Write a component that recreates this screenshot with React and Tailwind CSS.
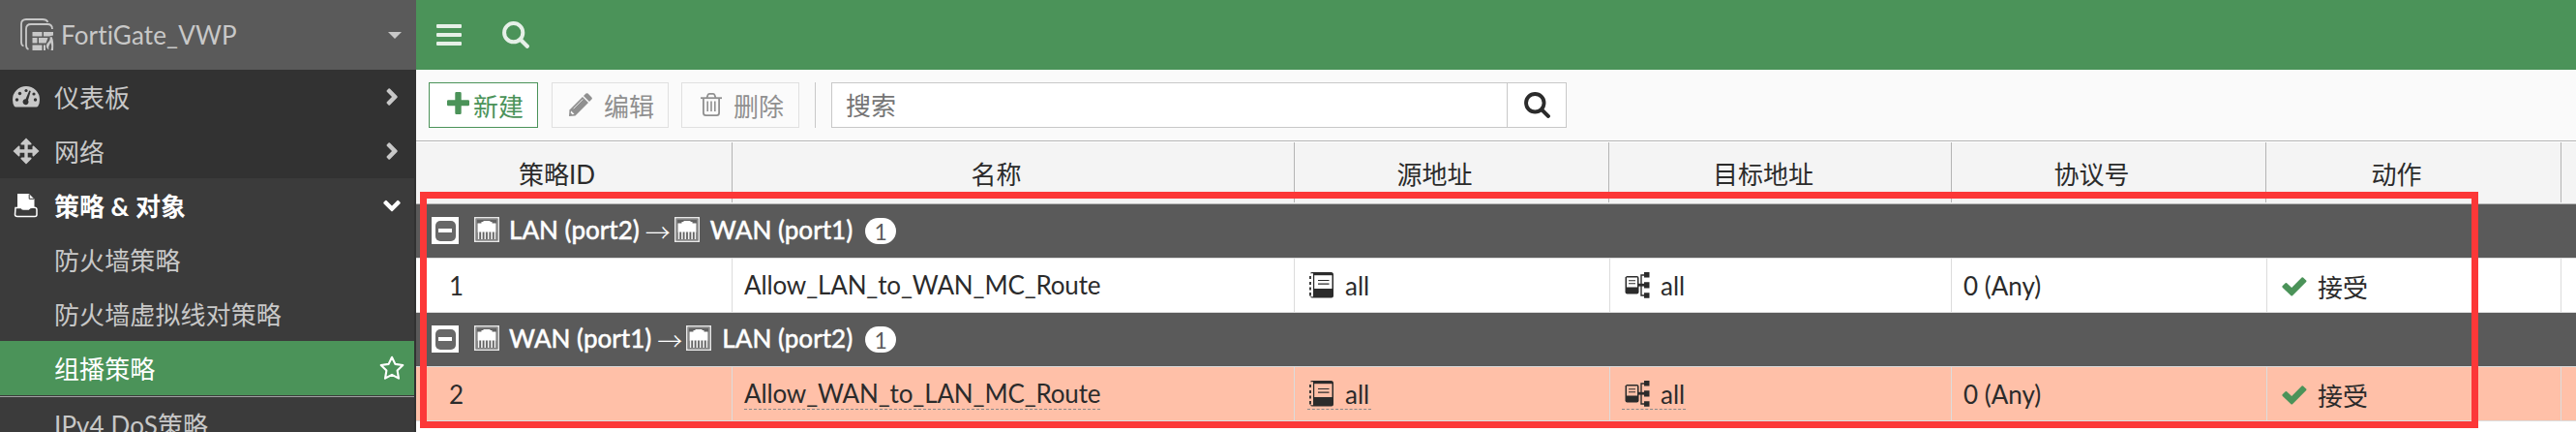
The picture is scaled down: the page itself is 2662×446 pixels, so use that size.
const TEXT = "font-['Lato','Noto_Sans_CJK_SC',sans-serif] text-[26px]";

function DeviceIcon() {
  return (
    <svg className="h-[36px] w-[36px] shrink-0" viewBox="0 0 36 36" fill="none" stroke="#c8c8c8">
      <path d="M4.5 29.5 C2.5 29 2 27.5 2 25.5 V7 Q2 2 7 2 H24 Q28 2 29.5 4.8" strokeWidth="1.8" />
      <path d="M9.5 33 Q7 32 7 28.500 V12 Q7 7 12 7 H29 Q34 7 34 12" strokeWidth="1.8" />
      <g fill="#c8c8c8" stroke="none">
        <path d="M13.500 15H23.500V19.500H13.500zM25 15H35V18.500L31 19.500H25zM13.500 21H18.500V26.500H13.500zM20 21H29.500L27.500 26.500H20zM13.500 28.500H23.500V34H13.500zM25 28.500H27V34H25z" />
        <path d="M33.500 20 C35 23 35.500 26 35 34 H32.500 C34 30 33 27 32 26 C31.500 29 29.500 29 30.500 33.500 C27 31 27.500 28 29.500 26 C31.500 24 32 22.500 31.500 20.500Z" />
      </g>
    </svg>
  );
}

function GaugeIcon() {
  return (
    <svg className="h-[28px] w-[28px]" viewBox="0 0 28 28">
      <path d="M14 3 A14 14 0 0 0 0 17 Q0 21 1.800 23.700 Q2.200 24.500 3.500 24.500 H24.500 Q25.800 24.500 26.200 23.700 Q28 21 28 17 A14 14 0 0 0 14 3Z" fill="#c8c8c8" />
      <g fill="#323232">
        <circle cx="14" cy="7.500" r="1.600" />
        <circle cx="7.500" cy="10.500" r="1.700" />
        <circle cx="22" cy="11" r="1.600" />
        <circle cx="4.500" cy="17" r="1.700" />
        <circle cx="23.500" cy="17" r="1.700" />
        <path d="M17.300 7.500 L18.800 8 L16 17.500 A3 3 0 1 1 13.500 16.200Z" />
      </g>
    </svg>
  );
}

function MoveIcon() {
  return (
    <svg className="h-[28px] w-[28px]" viewBox="0 0 28 28" fill="#c8c8c8">
      <path d="M14 .5 L19.500 6 Q20 7.500 18.500 7.500 H15.700 V12.300 H20.500 V9.500 Q20.800 8 22 8.700 L27.500 14 L22 19.300 Q20.800 20 20.500 18.500 V15.700 H15.700 V20.500 H18.500 Q20 20.500 19.500 22 L14 27.500 L8.500 22 Q8 20.500 9.500 20.500 H12.300 V15.700 H7.500 V18.500 Q7.200 20 6 19.300 L.5 14 L6 8.700 Q7.200 8 7.500 9.500 V12.300 H12.300 V7.500 H9.500 Q8 7.500 8.500 6Z" />
    </svg>
  );
}

function PolicyIcon() {
  return (
    <svg className="h-[28px] w-[28px]" viewBox="0 0 28 28">
      <path d="M5 2 H17 L22.500 7.500 V17 H20 Q18.500 17 17 18 H11 Q9 16 5 16Z" fill="#fff" />
      <path d="M17.200 2.500 V7.300 H22" fill="none" stroke="#3b3b3b" strokeWidth="1" />
      <path d="M3 16.500 H9 Q10 18 11.500 18 H16.500 Q18 16.300 20 16.300 H22.500 Q25 16.300 25 18.500 V23.500 Q25 25.500 23 25.500 H5 Q2.500 25.500 2.500 23.500Z" fill="#3b3b3b" stroke="#fff" strokeWidth="1.500" />
    </svg>
  );
}

function Chevron({ down }) {
  return down ? (
    <svg className="h-[18px] w-[18px]" viewBox="0 0 18 18" fill="#fff">
      <path d="M9 9.500 L14.500 4 Q15.200 3.500 16 4.200 L17.500 5.700 Q18 6.500 17.500 7.200 L9.700 15 Q9 15.500 8.300 15 L.5 7.200 Q0 6.500 .5 5.700 L2 4.200 Q2.800 3.500 3.500 4Z" />
    </svg>
  ) : (
    <svg className="mr-[3px] h-[18px] w-[12px]" viewBox="0 0 12 18" fill="#c8c8c8">
      <path d="M6 9 L.8 3.700 Q.2 3 .8 2.300 L2.500 .6 Q3.200 0 3.900 .6 L11.500 8.300 Q12 9 11.500 9.700 L3.900 17.400 Q3.200 18 2.500 17.400 L.8 15.700 Q.2 15 .8 14.300Z" />
    </svg>
  );
}

function StarIcon() {
  return (
    <svg className="-mr-[4px] h-[26px] w-[26px]" viewBox="0 0 26 26" fill="none" stroke="#fff" strokeWidth="2.100" strokeLinejoin="round">
      <path d="M13 1.800 L16.400 8.900 L24.300 10 L18.600 15.500 L20 23.700 L13 19.900 L6 23.700 L7.400 15.500 L1.700 10 L9.600 8.900Z" />
    </svg>
  );
}

function SearchIcon({ className }) {
  return (
    <svg className={className} viewBox="0 0 28 28" fill="none" stroke="currentColor">
      <circle cx="11.700" cy="11.700" r="9.600" strokeWidth="4" />
      <path d="M19 19 L25.800 25.800" strokeWidth="4.200" strokeLinecap="round" />
    </svg>
  );
}

function PlusIcon() {
  return (
    <svg className="mb-[4px] h-[23px] w-[23px]" viewBox="0 0 23 23" fill="#4b9359">
      <path d="M9.500 0 H13.500 Q14.700 0 14.700 1.200 V8.300 H21.800 Q23 8.300 23 9.500 V13 Q23 14.200 21.800 14.200 H14.700 V21.800 Q14.700 23 13.500 23 H9.500 Q8.300 23 8.300 21.800 V14.200 H1.200 Q0 14.200 0 13 V9.500 Q0 8.300 1.200 8.300 H8.300 V1.200 Q8.300 0 9.500 0Z" />
    </svg>
  );
}

function PencilIcon() {
  return (
    <svg className="mb-[2px] h-[24px] w-[24px]" viewBox="0 0 24 24" fill="#909090">
      <path d="M17.500 .6 Q18.500 -.3 19.600 .6 L23.400 4.400 Q24.300 5.500 23.400 6.500 L21 9 L15 3Z" />
      <path d="M14 4 L20 10 L6.500 23.500 L0 24 L.5 17.500Z" />
      <path d="M2.300 18.500 L5.500 21.700 L3.500 22.300 L1.700 20.500Z" fill="#fbfbfb" />
      <path d="M4.500 16.300 L14.300 6.500" stroke="#fbfbfb" strokeWidth=".8" />
    </svg>
  );
}

function TrashIcon() {
  return (
    <svg className="mb-[2px] h-[24px] w-[22px]" viewBox="0 0 22 24" fill="none" stroke="#909090">
      <path d="M0 5.200 H22" strokeWidth="1.800" />
      <path d="M6.500 5 L7.500 2 Q7.900 .9 9 .9 H13 Q14.100 .9 14.500 2 L15.500 5" strokeWidth="1.800" />
      <path d="M2.900 5 V20.500 Q2.900 23.100 5.500 23.100 H16.500 Q19.100 23.100 19.100 20.500 V5" strokeWidth="1.800" />
      <path d="M7.200 8.500 V19 M11 8.500 V19 M14.800 8.500 V19" strokeWidth="1.600" />
    </svg>
  );
}

function PortIcon() {
  return (
    <svg className="h-[26px] w-[26px] shrink-0" viewBox="0 0 26 26">
      <rect x=".75" y=".75" width="24.500" height="24.500" fill="none" stroke="#e8e8e8" strokeWidth="1.500" />
      <rect x="2.500" y="2.500" width="21" height="21" fill="#626262" stroke="#909090" strokeWidth=".8" />
      <path d="M3.500 6.500 H7.500 V5 H9.500 V4 H16.500 V5 H18.500 V6.500 H22.500 V15.500 H3.500Z" fill="#fff" />
      <path d="M4.500 15 V23 M7.900 15 V23 M11.300 15 V23 M14.700 15 V23 M18.100 15 V23 M21.500 15 V23" stroke="#f4f4f4" strokeWidth="1.600" />
    </svg>
  );
}

function BookIcon() {
  return (
    <svg className="h-[27px] w-[26px] shrink-0" viewBox="0 0 26 27">
      <path d="M1 1.200 Q1.500 0 3 0 H22.500 Q25 0 25 2.500 V24.500 Q25 26.500 23 26.500 H3 Q1.500 26.500 1 25.300 H4 V1.200Z" fill="#2b2b2b" />
      <path d="M5.200 3.200 H23.500 V17 H5.200Z" className="fill-[var(--row)]" />
      <path d="M9 8.500 H20.500 M9 12.200 H20.500" stroke="#2b2b2b" strokeWidth="1.200" />
      <path d="M1 4 V7 M1 10 V13 M1 15.500 V18.500 M1 21 V24.500" stroke="#2b2b2b" strokeWidth="1.800" />
    </svg>
  );
}

function AddressTreeIcon() {
  return (
    <svg className="h-[27px] w-[26px] shrink-0" viewBox="0 0 26 27">
      <path d="M2 4 H12.500 Q14.500 4 14.500 6 V20.500 Q14.500 22.500 12.500 22.500 H2.500 Q.5 22.500 .5 20.500 V5.500Z" fill="#2b2b2b" />
      <path d="M2 5.500 H13 V15.500 H2Z" className="fill-[var(--row)]" />
      <path d="M4 8.700 H11 M4 11.800 H11" stroke="#2b2b2b" strokeWidth="1.100" />
      <path d="M20 3 H17 V24 H20" fill="none" stroke="#2b2b2b" strokeWidth="1.400" />
      <path d="M13.500 13.200 H21" stroke="#2b2b2b" strokeWidth="2.800" />
      <path d="M20 0 H25.500 V5.500 H20zM20 10.200 H25.500 V16.500 H20zM20 21.300 H25.500 V26.800 H20z" fill="#2b2b2b" />
    </svg>
  );
}

function CheckIcon() {
  return (
    <svg className="mt-[3px] h-[20px] w-[26px] shrink-0" viewBox="0 0 26 20" fill="#4b9359">
      <path d="M20.600 .5 Q21.300 -.1 22 .5 L25.200 3.600 Q25.800 4.300 25.200 5 L11 19.200 Q10.200 19.800 9.500 19.200 L.6 10.700 Q.1 10 .6 9.300 L3.700 6.200 Q4.400 5.600 5.100 6.200 L10.200 11Z" />
    </svg>
  );
}

function NavItem({ icon, label, trailing, className }) {
  return (
    <div className={`flex h-[56px] shrink-0 items-center pr-[14px] ${className}`}>
      <span className="flex w-[56px] shrink-0 pl-[13px]">{icon}</span>
      <span className="flex-1 pt-[1px] tracking-[0.1px] whitespace-nowrap">{label}</span>
      {trailing}
    </div>
  );
}

function Sidebar() {
  return (
    <aside className="flex h-full w-[430px] shrink-0 flex-col bg-[#323232] text-[#c8c8c8]">
      <div className="flex h-[72px] shrink-0 items-center bg-[#5a5a5a] pr-[15px] pl-[20px]">
        <DeviceIcon />
        <span className="ml-[7px] flex-1 tracking-[0.15px]">FortiGate_VWP</span>
        <svg className="h-[7px] w-[14px]" viewBox="0 0 14 7"><path d="M0 0H14L7 7Z" fill="#c8c8c8" /></svg>
      </div>
      <NavItem icon={<GaugeIcon />} label="仪表板" trailing={<Chevron />} className="w-[428px]" />
      <NavItem icon={<MoveIcon />} label="网络" trailing={<Chevron />} className="w-[428px]" />
      <div className="w-[428px] flex-1 bg-[#3b3b3b]">
        <NavItem icon={<PolicyIcon />} label="策略 & 对象" trailing={<Chevron down />} className="font-bold text-white" />
        <NavItem label="防火墙策略" />
        <NavItem label="防火墙虚拟线对策略" />
        <NavItem label="组播策略" trailing={<StarIcon />} className="bg-[#4b9359] text-white" />
        <div className="mt-[1px] h-px bg-[#a0a0a0]" />
        <NavItem label="IPv4 DoS策略" />
      </div>
    </aside>
  );
}

function Toolbar() {
  return (
    <div className="flex h-[74px] shrink-0 items-start border-b border-[#b4b4b4] bg-[#fafafa] pt-[13px] pl-[13px]">
      <div className="flex h-[47px] w-[113px] items-center border border-[#4b9359] bg-white pl-[18px] text-[#4b9359]">
        <PlusIcon />
        <span className="ml-[4px] pt-[3px]">新建</span>
      </div>
      <div className="ml-[14px] flex h-[47px] w-[121px] items-center border border-[#e0e0e0] bg-[#fbfbfb] pl-[17px] text-[#909090]">
        <PencilIcon />
        <span className="ml-[12px] pt-[3px]">编辑</span>
      </div>
      <div className="ml-[13px] flex h-[47px] w-[122px] items-center border border-[#e0e0e0] bg-[#fbfbfb] pl-[19px] text-[#909090]">
        <TrashIcon />
        <span className="ml-[12px] pt-[3px]">删除</span>
      </div>
      <div className="ml-[16px] h-[47px] w-px bg-[#c8c8c8]" />
      <div className="ml-[16px] flex h-[47px] w-[760px] border border-[#c8c8c8] bg-white">
        <div className="flex flex-1 items-center pt-[1px] pl-[14px] text-[#757575]">搜索</div>
        <div className="flex w-[61px] items-center justify-center border-l border-[#c8c8c8] text-[#2b2b2b]">
          <SearchIcon className="h-[27px] w-[27px]" />
        </div>
      </div>
    </div>
  );
}

const columns = [
  { label: "策略ID", width: "w-[327px]" },
  { label: "名称", width: "w-[581px]" },
  { label: "源地址", width: "w-[325px]" },
  { label: "目标地址", width: "w-[354px]" },
  { label: "协议号", width: "w-[325px]" },
  { label: "动作", width: "w-[305px]" },
];

function TableHead() {
  return (
    <div className="mt-px flex h-[64px] shrink-0 border-b border-[#b4b4b4] bg-[#f4f4f4]">
      {columns.map((c) => (
        <div key={c.label} className={`${c.width} mb-[1px] flex shrink-0 items-center justify-center border-r border-[#b4b4b4] pt-[3px] pr-[35px] text-[#2b2b2b]`}>
          {c.label}
        </div>
      ))}
    </div>
  );
}

function GroupRow({ from, to, count }) {
  return (
    <div className="flex h-[56px] shrink-0 items-center border-b border-[#dcdcdc] bg-[#5a5a5a] pl-[16px] font-medium whitespace-nowrap text-white">
      <div className="mb-[1px] flex h-[28px] w-[28px] items-center justify-center bg-white">
        <div className="flex h-[21px] w-[21px] items-center justify-center rounded-[5px] bg-[#686868]">
          <div className="h-[4px] w-[14px] bg-white" />
        </div>
      </div>
      <span className="ml-[16px] flex pb-[3px]"><PortIcon /></span>
      <span className="ml-[10px] pb-[4px] [-webkit-text-stroke:0.4px_white]">{from}</span>
      <span className="ml-[6px] w-[30px] font-['Noto_Sans_CJK_SC'] font-light">→</span>
      <span className="flex pb-[3px]"><PortIcon /></span>
      <span className="ml-[11px] pb-[4px] [-webkit-text-stroke:0.4px_white]">{to}</span>
      <span className="ml-[13px] flex h-[27px] w-[32px] items-center justify-center rounded-full bg-white text-[23px] font-normal text-[#5a5a5a]">{count}</span>
    </div>
  );
}

function PolicyRow({ id, name, hit }) {
  const line = hit ? "border-b border-dashed border-[#8a8a8a]" : "border-b border-transparent";
  const cell = "flex shrink-0 items-center border-r border-[#dcdcdc]";
  return (
    <div className={`flex h-[56px] shrink-0 border-b border-[#dcdcdc] whitespace-nowrap text-[#2b2b2b] ${hit ? "bg-[#ffc0a8] [--row:#ffc0a8]" : "bg-white [--row:#ffffff]"}`}>
      <div className={`${cell} w-[327px] pl-[34px]`}>{id}</div>
      <div className={`${cell} w-[581px] pl-[12px]`}><span className={`${line} leading-[32px] tracking-[-0.13px]`}>{name}</span></div>
      <div className={`${cell} w-[326px] pl-[13px]`}>
        <span className={`${line} flex h-[33px] w-[66px] items-center pl-[2px]`}><BookIcon /><span className="ml-[11px] pt-[1px]">all</span></span>
      </div>
      <div className={`${cell} w-[353px] pl-[12px]`}>
        <span className={`${line} flex h-[33px] w-[66px] items-center pl-[3px]`}><AddressTreeIcon /><span className="ml-[11px] pt-[1px]">all</span></span>
      </div>
      <div className={`${cell} w-[326px] pl-[12px]`}>0 (Any)</div>
      <div className={`${cell} w-[304px] pl-[15px]`}>
        <CheckIcon /><span className="ml-[11px] pt-[4px]">接受</span>
      </div>
    </div>
  );
}

export default function App() {
  return (
    <div className={`relative flex h-[446px] w-[2662px] overflow-hidden bg-white leading-[36px] ${TEXT}`}>
      <Sidebar />
      <main className="flex min-w-0 flex-1 flex-col">
        <header className="flex h-[72px] shrink-0 items-center bg-[#4b9359] pl-[21px] text-[#e6f0e8]">
          <div className="flex w-[26px] flex-col gap-[5px]">
            <div className="h-[4px] rounded-[1px] bg-current" />
            <div className="h-[4px] rounded-[1px] bg-current" />
            <div className="h-[4px] rounded-[1px] bg-current" />
          </div>
          <SearchIcon className="ml-[42px] h-[28px] w-[28px]" />
        </header>
        <Toolbar />
        <TableHead />
        <GroupRow from="LAN (port2)" to="WAN (port1)" count={1} />
        <PolicyRow id={1} name="Allow_LAN_to_WAN_MC_Route" />
        <GroupRow from="WAN (port1)" to="LAN (port2)" count={1} />
        <PolicyRow id={2} name="Allow_WAN_to_LAN_MC_Route" hit />
      </main>
      <div className="absolute top-[198px] left-[434px] h-[244px] w-[2127px] border-[7px] border-[#fc3838]" />
    </div>
  );
}
